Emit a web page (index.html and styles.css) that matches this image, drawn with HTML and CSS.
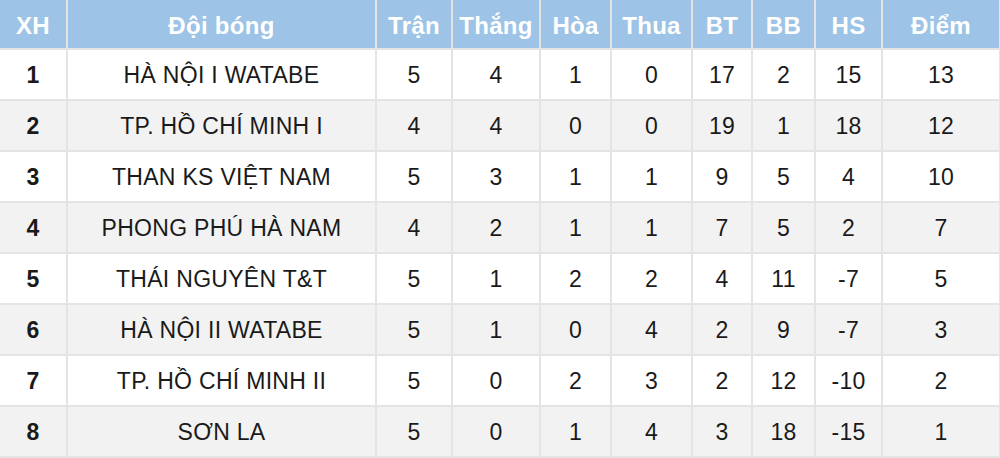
FILE: index.html
```html
<!DOCTYPE html>
<html lang="vi">
<head>
<meta charset="utf-8">
<link rel="stylesheet" href="styles.css">
</head>
<body>
<table class="standings">
  <colgroup>
    <col class="c-xh"><col class="c-team"><col class="c-tran"><col class="c-thang"><col class="c-hoa"><col class="c-thua"><col class="c-bt"><col class="c-bb"><col class="c-hs"><col class="c-diem">
  </colgroup>
  <thead>
    <tr><th>XH</th><th>Đội bóng</th><th>Trận</th><th>Thắng</th><th>Hòa</th><th>Thua</th><th>BT</th><th>BB</th><th>HS</th><th>Điểm</th></tr>
  </thead>
  <tbody>
    <tr><td class="rank">1</td><td>HÀ NỘI I WATABE</td><td>5</td><td>4</td><td>1</td><td>0</td><td>17</td><td>2</td><td>15</td><td>13</td></tr>
    <tr><td class="rank">2</td><td>TP. HỒ CHÍ MINH I</td><td>4</td><td>4</td><td>0</td><td>0</td><td>19</td><td>1</td><td>18</td><td>12</td></tr>
    <tr><td class="rank">3</td><td>THAN KS VIỆT NAM</td><td>5</td><td>3</td><td>1</td><td>1</td><td>9</td><td>5</td><td>4</td><td>10</td></tr>
    <tr><td class="rank">4</td><td>PHONG PHÚ HÀ NAM</td><td>4</td><td>2</td><td>1</td><td>1</td><td>7</td><td>5</td><td>2</td><td>7</td></tr>
    <tr><td class="rank">5</td><td>THÁI NGUYÊN T&amp;T</td><td>5</td><td>1</td><td>2</td><td>2</td><td>4</td><td>11</td><td>-7</td><td>5</td></tr>
    <tr><td class="rank">6</td><td>HÀ NỘI II WATABE</td><td>5</td><td>1</td><td>0</td><td>4</td><td>2</td><td>9</td><td>-7</td><td>3</td></tr>
    <tr><td class="rank">7</td><td>TP. HỒ CHÍ MINH II</td><td>5</td><td>0</td><td>2</td><td>3</td><td>2</td><td>12</td><td>-10</td><td>2</td></tr>
    <tr><td class="rank">8</td><td>SƠN LA</td><td>5</td><td>0</td><td>1</td><td>4</td><td>3</td><td>18</td><td>-15</td><td>1</td></tr>
  </tbody>
</table>
</body>
</html>
```
FILE: styles.css
```css
html, body {
  margin: 0;
  padding: 0;
  background: #ffffff;
}
.standings {
  width: 1000px;
  table-layout: fixed;
  border-collapse: collapse;
  font-family: "Liberation Sans", Arial, sans-serif;
  color: #1a1a1a;
}
.c-xh { width: 67px; }
.c-team { width: 309px; }
.c-tran { width: 76px; }
.c-thang { width: 88px; }
.c-hoa { width: 71px; }
.c-thua { width: 81px; }
.c-bt { width: 60px; }
.c-bb { width: 63px; }
.c-hs { width: 67px; }
.c-diem { width: 118px; }
.standings th,
.standings td {
  border: 2px solid #e4e4e4;
  text-align: center;
  vertical-align: middle;
  padding: 0;
  white-space: nowrap;
}
.standings tr > :first-child { border-left: none; }
.standings thead th { border-top: none; }
.standings th {
  background: #9dc3e6;
  color: #ffffff;
  font-weight: bold;
  font-size: 24px;
  letter-spacing: 0.3px;
  height: 45px;
  padding-top: 3px;
}
.standings td {
  font-size: 23px;
  letter-spacing: 0.3px;
  height: 47px;
  padding-top: 2px;
}
.standings tbody tr:nth-child(even) td { background: #f2f2f2; }
.standings td.rank { font-weight: bold; }
```
